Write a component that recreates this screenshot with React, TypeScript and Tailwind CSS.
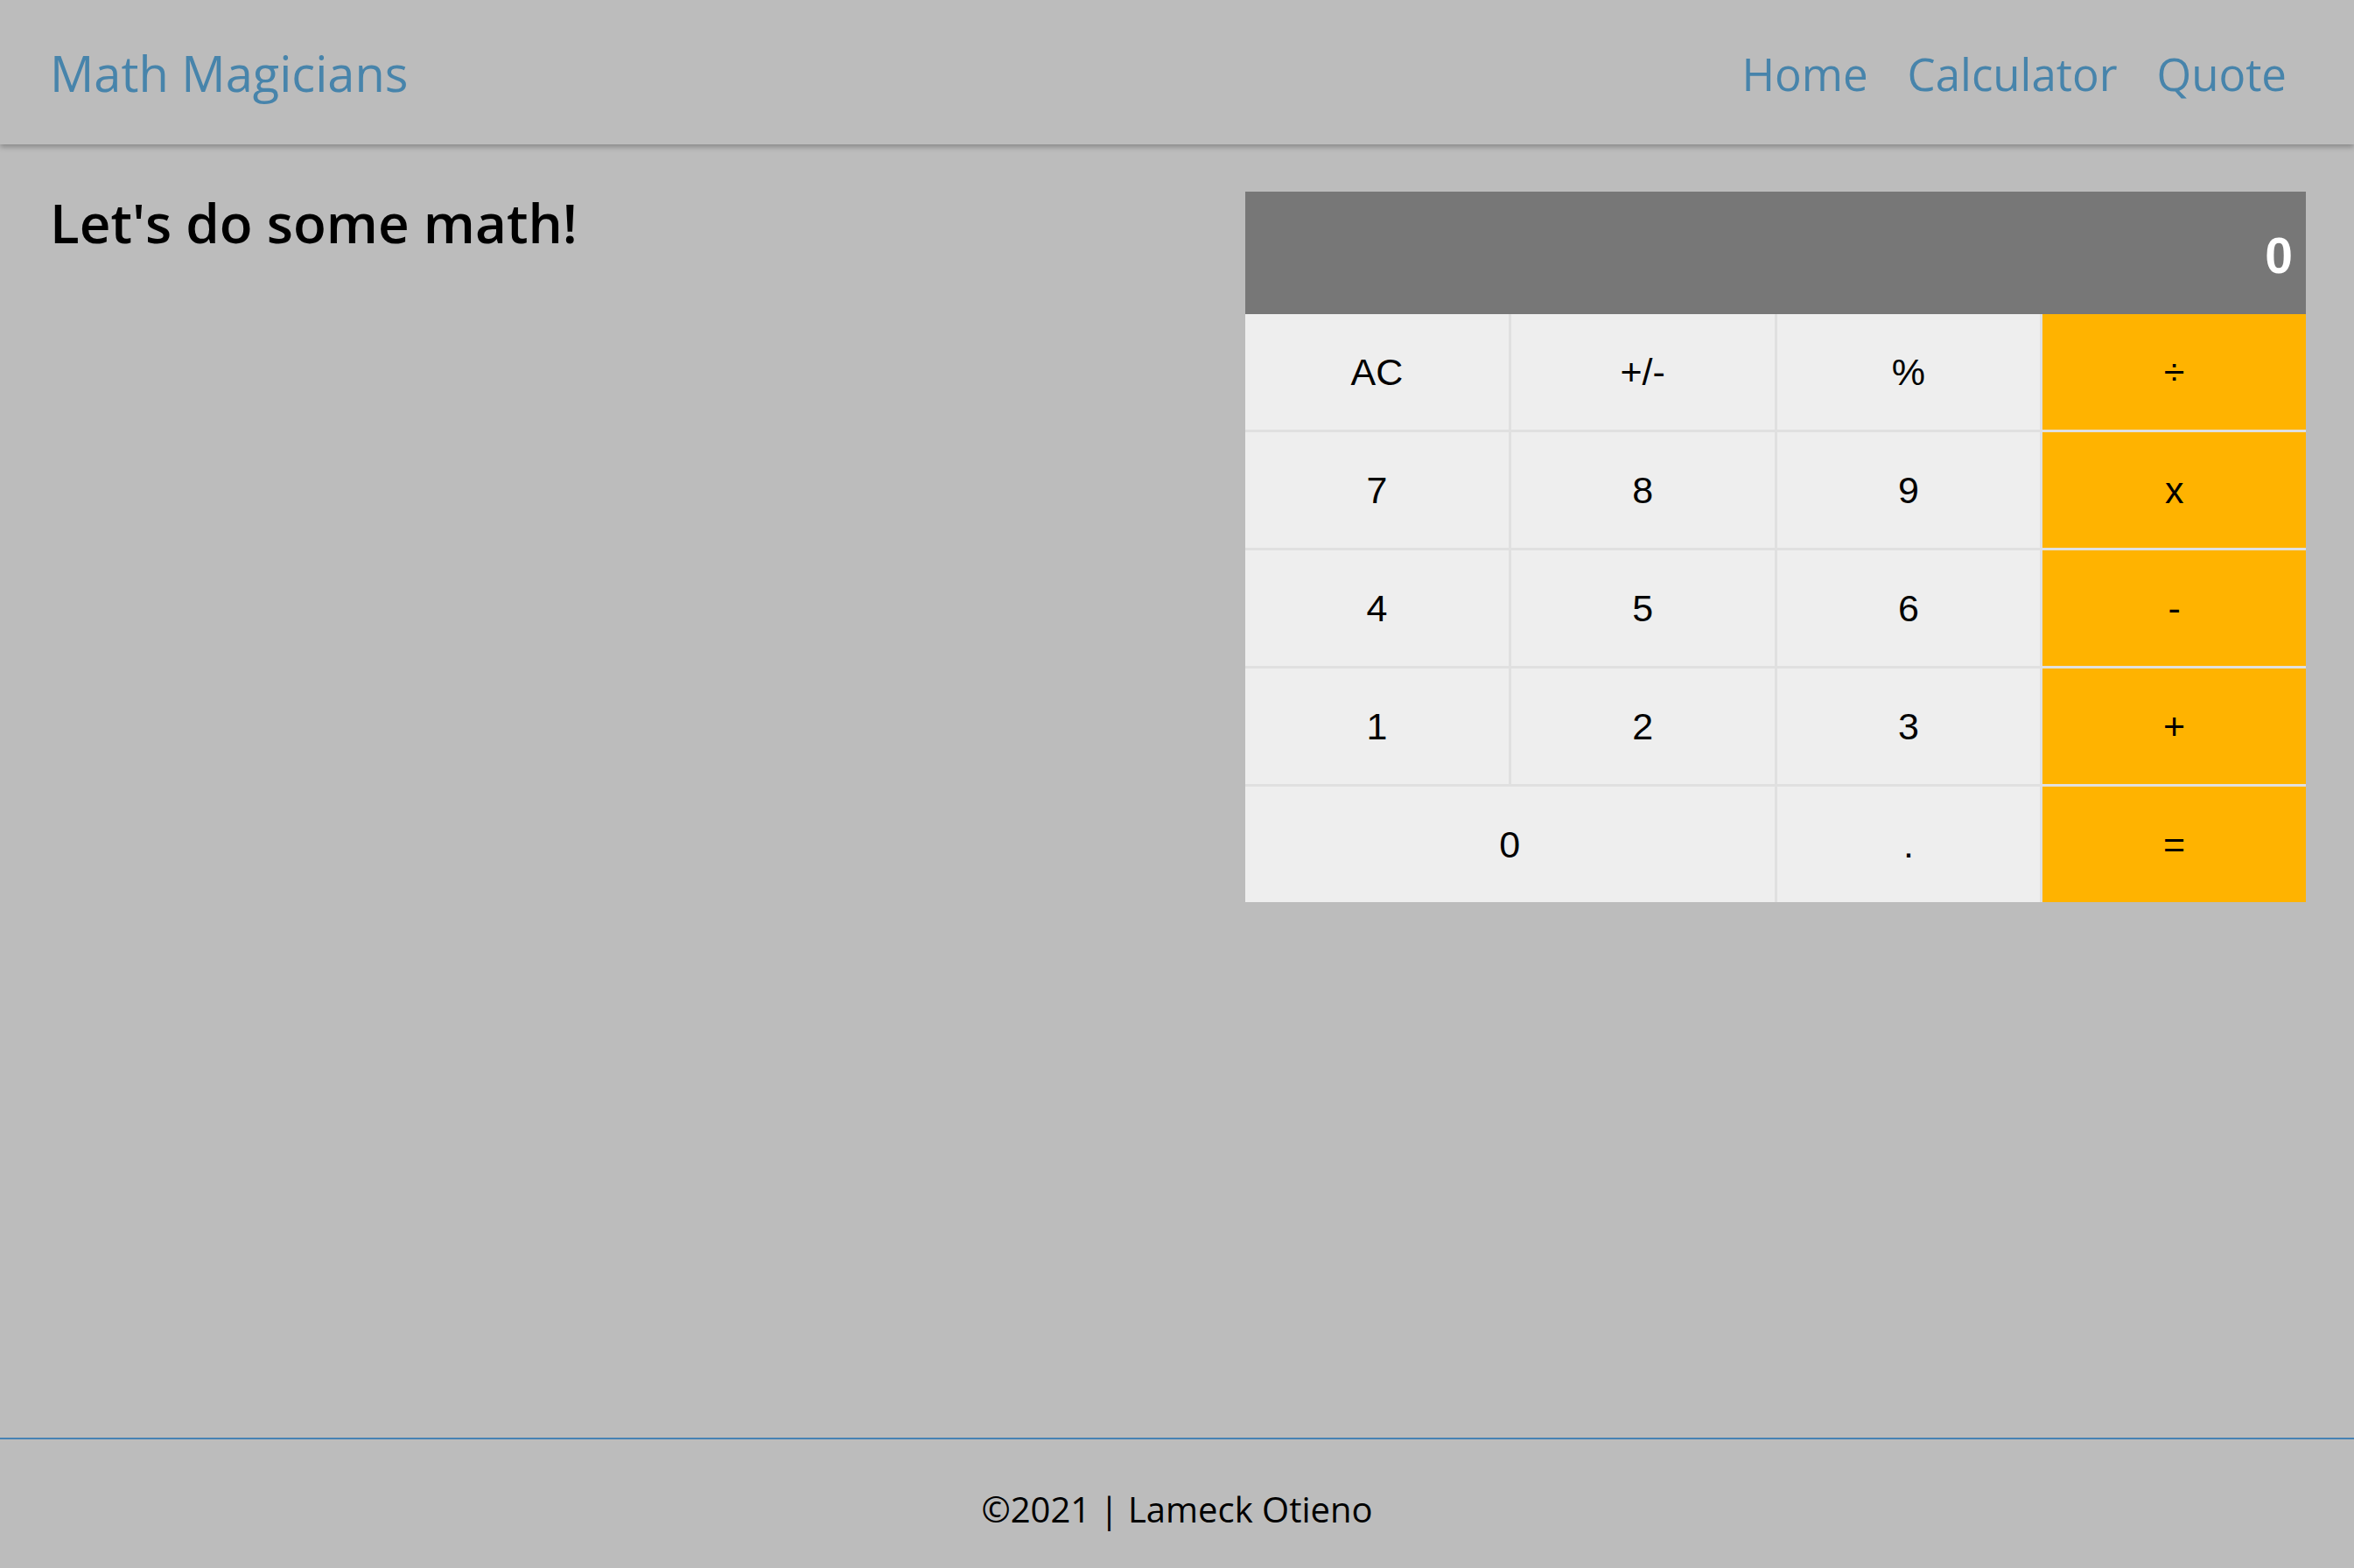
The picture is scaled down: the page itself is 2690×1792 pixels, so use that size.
import React from 'react';

const keys = [
  { label: 'AC' },
  { label: '+/-' },
  { label: '%' },
  { label: '÷', op: true },
  { label: '7' },
  { label: '8' },
  { label: '9' },
  { label: 'x', op: true },
  { label: '4' },
  { label: '5' },
  { label: '6' },
  { label: '-', op: true },
  { label: '1' },
  { label: '2' },
  { label: '3' },
  { label: '+', op: true },
  { label: '0', wide: true },
  { label: '.' },
  { label: '=', op: true },
];

function Calculator() {
  return (
    <div className="w-[1212px] shrink-0 font-['Liberation_Sans',Arial,sans-serif]">
      {/* display */}
      <div className="h-[140px] bg-[#777777] flex items-center justify-end pr-[15px] pt-[6px]">
        <span className="text-white font-bold text-[57px] leading-none">0</span>
      </div>
      <div className="grid grid-cols-4 gap-[3px] bg-[#e0e0e0]">
        {keys.map((k) => (
          <button
            key={k.label}
            className={`h-[132px] flex items-center justify-center text-[43px] text-black ${
              k.op ? 'bg-[#ffb300]' : 'bg-[#eeeeee]'
            } ${k.wide ? 'col-span-2' : ''}`}
          >
            {k.label}
          </button>
        ))}
      </div>
    </div>
  );
}

export default function App() {
  return (
    <div className="min-h-screen flex flex-col bg-[#bcbcbc] font-['Open_Sans','Noto_Sans',sans-serif]">
      <header className="relative z-10 h-[165px] shrink-0 flex items-center justify-between pl-[57px] pr-[77px] shadow-[0_3px_6px_rgba(0,0,0,0.28)]">
        <h1 className="text-[56px] text-[#4784ab] leading-none">Math Magicians</h1>
        <nav className="flex items-center gap-[45px] text-[51px] text-[#4784ab] leading-none pt-[4px]">
          <a href="#">Home</a>
          <a href="#">Calculator</a>
          <a href="#">Quote</a>
        </nav>
      </header>

      <main className="flex-1 flex justify-between pl-[57px] pr-[55px] pt-[54px]">
        <h2 className="text-[62px] font-semibold text-black leading-none pt-[4px]">Let&apos;s do some math!</h2>
        <Calculator />
      </main>

      <footer className="h-[149px] shrink-0 border-t-2 border-[#4682b4] flex items-center justify-center pt-[12px]">
        <p className="text-[40px] text-black">©2021 | Lameck Otieno</p>
      </footer>
    </div>
  );
}
